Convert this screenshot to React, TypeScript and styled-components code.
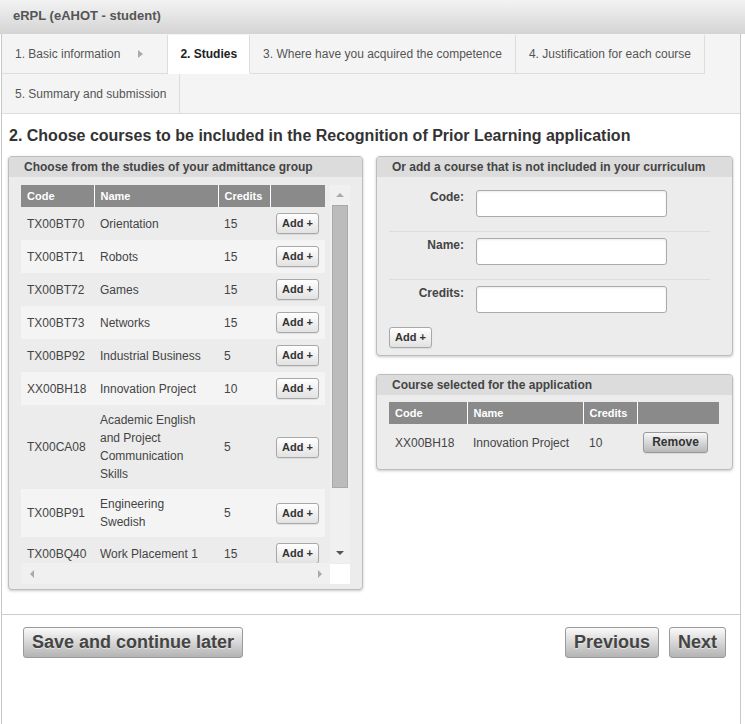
import React from 'react';
import styled, { createGlobalStyle, css } from 'styled-components';

const GlobalStyle = createGlobalStyle`
    html, body {
        margin: 0;
        padding: 0;
        background: #fff;
    }
    body {
        font-family: 'Liberation Sans', Arial, sans-serif;
        color: #444;
    }
`;

const TopBar = styled.div`
    height: 34px;
    box-sizing: border-box;
    padding: 8px 13px 0;
    background: linear-gradient(#f3f3f3, #d4d4d4);
    font-size: 13px;
    line-height: 15px;
    font-weight: bold;
    color: #555;
`;

const Frame = styled.div`
    width: 740px;
    margin-left: 1px;
    min-height: calc(100vh - 34px);
    box-sizing: border-box;
    border-left: 1px solid #c8c8c8;
    border-right: 1px solid #c8c8c8;
    display: flex;
    flex-direction: column;
`;

const Tabs = styled.div`
    display: flex;
    flex-wrap: wrap;
    padding-top: 1px;
    background: #f4f4f4;
    border-bottom: 1px solid #ddd;
`;

const Tab = styled.div<{ $active?: boolean; $lastRow?: boolean }>`
    display: flex;
    align-items: center;
    height: 39px;
    box-sizing: border-box;
    padding: 0 13px;
    border-right: 1px solid #ddd;
    border-bottom: ${p => (p.$lastRow ? 'none' : '1px solid #ddd')};
    font-size: 12px;
    color: #555;
    white-space: nowrap;
    ${p =>
        p.$active &&
        css`
            padding: 0 12px;
            background: #fff;
            color: #222;
            font-weight: bold;
            border-bottom-color: #fff;
        `}
`;

const TabArrow = styled.span`
    width: 0;
    height: 0;
    margin: 0 11px 0 18px;
    border-left: 5px solid #aaa;
    border-top: 4px solid transparent;
    border-bottom: 4px solid transparent;
`;

const Content = styled.div`
    padding: 0 7px 0 6px;
`;

const Heading = styled.h2`
    margin: 12px 0 10px 1px;
    font-size: 16px;
    line-height: 20px;
    font-weight: bold;
    color: #333;
`;

const Columns = styled.div`
    display: flex;
    align-items: flex-start;
    gap: 13px;
`;

const Column = styled.div<{ $width: number }>`
    width: ${p => p.$width}px;
    display: flex;
    flex-direction: column;
    gap: 18px;
`;

const Panel = styled.section`
    border: 1px solid #bdbdbd;
    border-radius: 4px;
    background: #ececec;
    box-shadow: 0 1px 3px rgba(0, 0, 0, 0.22);
    overflow: hidden;
`;

const PanelHeader = styled.div`
    height: 20px;
    line-height: 21px;
    padding-left: 15px;
    background: #dcdcdc;
    font-size: 12px;
    font-weight: bold;
    color: #444;
`;

const PanelBody = styled.div<{ $pad: string }>`
    padding: ${p => p.$pad};
`;

const ScrollBox = styled.div`
    display: grid;
    grid-template-columns: 309px 20px;
    grid-template-rows: 378px 21px;
`;

const Viewport = styled.div`
    overflow: hidden;
`;

const VTrack = styled.div`
    display: flex;
    flex-direction: column;
    align-items: center;
    background: #f0f0f0;
`;

const ArrowBox = styled.div<{ $size: number }>`
    flex: 0 0 ${p => p.$size}px;
    width: ${p => p.$size}px;
    height: 21px;
    display: flex;
    align-items: center;
    justify-content: center;
`;

const Arrow = styled.span<{ $dir: 'up' | 'down' | 'left' | 'right'; $color?: string }>`
    width: 0;
    height: 0;
    ${p => {
        const c = p.$color || '#999';
        switch (p.$dir) {
            case 'up':
                return css`
                    border-left: 4px solid transparent;
                    border-right: 4px solid transparent;
                    border-bottom: 4px solid ${c};
                `;
            case 'down':
                return css`
                    border-left: 4px solid transparent;
                    border-right: 4px solid transparent;
                    border-top: 4px solid ${c};
                `;
            case 'left':
                return css`
                    border-top: 4px solid transparent;
                    border-bottom: 4px solid transparent;
                    border-right: 4px solid ${c};
                `;
            default:
                return css`
                    border-top: 4px solid transparent;
                    border-bottom: 4px solid transparent;
                    border-left: 4px solid ${c};
                `;
        }
    }}
`;

const Thumb = styled.div`
    width: 14px;
    height: 281px;
    background: #bcbcbc;
    border: 1px solid #a9a9a9;
`;

const TrackFill = styled.div`
    flex: 1;
`;

const HTrack = styled.div`
    display: flex;
    justify-content: space-between;
    background: #f0f0f0;
`;

const Corner = styled.div`
    background: #fff;
    margin-top: 1px;
`;

const Table = styled.table<{ $width: number }>`
    width: ${p => p.$width}px;
    table-layout: fixed;
    border-collapse: collapse;
    font-size: 12px;
    color: #444;
`;

const Th = styled.th`
    height: 22px;
    padding: 0 6px;
    background: #8a8a8a;
    color: #fff;
    font-size: 11px;
    font-weight: bold;
    text-align: left;
    border-right: 1px solid #fff;

    &:last-child {
        border-right: none;
    }
`;

const Tr = styled.tr`
    &:nth-child(even) {
        background: #f4f4f4;
    }
`;

const Td = styled.td<{ $pad?: number }>`
    padding: ${p => p.$pad ?? 6}px 6px;
    line-height: 18px;
    vertical-align: middle;
`;

const SmallButton = styled.button`
    height: 21px;
    padding: 0 5px;
    border: 1px solid #a8a8a8;
    border-radius: 3px;
    background: linear-gradient(#ffffff, #e2e2e2);
    box-shadow: 0 1px 1px rgba(0, 0, 0, 0.08);
    font-family: inherit;
    font-size: 11px;
    font-weight: bold;
    color: #333;
    line-height: 19px;
    cursor: pointer;
`;

const RemoveButton = styled(SmallButton)`
    width: 65px;
    padding: 0;
    border-color: #999;
    background: linear-gradient(#f7f7f7, #b8b8b8);
    font-size: 12px;
`;

const FormRow = styled.div<{ $last?: boolean }>`
    display: grid;
    grid-template-columns: 75px 191px;
    column-gap: 12px;
    width: 321px;
    padding: 6px 0 14px;
    border-bottom: ${p => (p.$last ? 'none' : '1px solid #dcdcdc')};
`;

const Label = styled.label`
    text-align: right;
    font-size: 12px;
    line-height: 14px;
    font-weight: bold;
    color: #444;
`;

const Input = styled.input`
    height: 27px;
    box-sizing: border-box;
    border: 1px solid #aaa;
    border-radius: 3px;
    background: #fff;
    box-shadow: inset 0 1px 2px rgba(0, 0, 0, 0.08);
`;

const Footer = styled.div`
    margin-top: 24px;
    border-top: 1px solid #ccc;
    padding: 12px 14px 0 21px;
    display: flex;
    justify-content: space-between;
`;

const ButtonGroup = styled.div`
    display: flex;
    gap: 10px;
`;

const BigButton = styled.button`
    height: 31px;
    padding: 0 8px;
    border: 1px solid #9a9a9a;
    border-radius: 3px;
    background: linear-gradient(#fafafa, #b3b3b3);
    font-family: inherit;
    font-size: 18px;
    font-weight: bold;
    color: #444;
    text-shadow: 0 1px 0 rgba(255, 255, 255, 0.5);
    cursor: pointer;
`;

interface Course {
    code: string;
    name: string;
    credits: number;
}

const courses: Course[] = [
    { code: 'TX00BT70', name: 'Orientation', credits: 15 },
    { code: 'TX00BT71', name: 'Robots', credits: 15 },
    { code: 'TX00BT72', name: 'Games', credits: 15 },
    { code: 'TX00BT73', name: 'Networks', credits: 15 },
    { code: 'TX00BP92', name: 'Industrial Business', credits: 5 },
    { code: 'XX00BH18', name: 'Innovation Project', credits: 10 },
    { code: 'TX00CA08', name: 'Academic English and Project Communication Skills', credits: 5 },
    { code: 'TX00BP91', name: 'Engineering Swedish', credits: 5 },
    { code: 'TX00BQ40', name: 'Work Placement 1', credits: 15 },
];

const selected: Course[] = [{ code: 'XX00BH18', name: 'Innovation Project', credits: 10 }];

const tabs = [
    '1. Basic information',
    '2. Studies',
    '3. Where have you acquired the competence',
    '4. Justification for each course',
    '5. Summary and submission',
];

const TableHead = () => (
    <thead>
        <tr>
            <Th>Code</Th>
            <Th>Name</Th>
            <Th>Credits</Th>
            <Th />
        </tr>
    </thead>
);

const CourseTable = () => (
    <Table $width={304}>
        <colgroup>
            <col style={{ width: 73 }} />
            <col style={{ width: 124 }} />
            <col style={{ width: 52 }} />
            <col style={{ width: 55 }} />
        </colgroup>
        <TableHead />
        <tbody>
            {courses.map(c => (
                <Tr key={c.code}>
                    <Td>{c.code}</Td>
                    <Td>{c.name}</Td>
                    <Td>{c.credits}</Td>
                    <Td>
                        <SmallButton>Add +</SmallButton>
                    </Td>
                </Tr>
            ))}
        </tbody>
    </Table>
);

const SelectedTable = () => (
    <Table $width={330}>
        <colgroup>
            <col style={{ width: 78 }} />
            <col style={{ width: 116 }} />
            <col style={{ width: 54 }} />
            <col style={{ width: 82 }} />
        </colgroup>
        <TableHead />
        <tbody>
            {selected.map(c => (
                <Tr key={c.code}>
                    <Td $pad={8}>{c.code}</Td>
                    <Td $pad={8}>{c.name}</Td>
                    <Td $pad={8}>{c.credits}</Td>
                    <Td $pad={8}>
                        <RemoveButton>Remove</RemoveButton>
                    </Td>
                </Tr>
            ))}
        </tbody>
    </Table>
);

const fields = ['Code:', 'Name:', 'Credits:'];

const App = () => (
    <>
        <GlobalStyle />
        <TopBar>eRPL (eAHOT - student)</TopBar>
        <Frame>
            <Tabs>
                {tabs.map((t, i) => (
                    <Tab key={t} $active={i === 1} $lastRow={i === 4}>
                        {t}
                        {i === 0 && <TabArrow />}
                    </Tab>
                ))}
            </Tabs>

            <Content>
                <Heading>
                    2. Choose courses to be included in the Recognition of Prior Learning application
                </Heading>

                <Columns>
                    <Column $width={355}>
                        <Panel>
                            <PanelHeader>Choose from the studies of your admittance group</PanelHeader>
                            <PanelBody $pad="8px 11px 5px 12px">
                                <ScrollBox>
                                    <Viewport>
                                        <CourseTable />
                                    </Viewport>
                                    <VTrack>
                                        <ArrowBox $size={20}>
                                            <Arrow $dir="up" $color="#aaa" />
                                        </ArrowBox>
                                        <Thumb />
                                        <TrackFill />
                                        <ArrowBox $size={20}>
                                            <Arrow $dir="down" $color="#555" />
                                        </ArrowBox>
                                    </VTrack>
                                    <HTrack>
                                        <ArrowBox $size={21}>
                                            <Arrow $dir="left" $color="#aaa" />
                                        </ArrowBox>
                                        <ArrowBox $size={21}>
                                            <Arrow $dir="right" $color="#aaa" />
                                        </ArrowBox>
                                    </HTrack>
                                    <Corner />
                                </ScrollBox>
                            </PanelBody>
                        </Panel>
                    </Column>

                    <Column $width={357}>
                        <Panel>
                            <PanelHeader>Or add a course that is not included in your curriculum</PanelHeader>
                            <PanelBody $pad="7px 12px 7px">
                                {fields.map((f, i) => (
                                    <FormRow key={f} $last={i === fields.length - 1}>
                                        <Label>{f}</Label>
                                        <Input type="text" />
                                    </FormRow>
                                ))}
                                <SmallButton>Add +</SmallButton>
                            </PanelBody>
                        </Panel>

                        <Panel>
                            <PanelHeader>Course selected for the application</PanelHeader>
                            <PanelBody $pad="7px 12px 8px">
                                <SelectedTable />
                            </PanelBody>
                        </Panel>
                    </Column>
                </Columns>
            </Content>

            <Footer>
                <BigButton>Save and continue later</BigButton>
                <ButtonGroup>
                    <BigButton>Previous</BigButton>
                    <BigButton>Next</BigButton>
                </ButtonGroup>
            </Footer>
        </Frame>
    </>
);

export default App;
